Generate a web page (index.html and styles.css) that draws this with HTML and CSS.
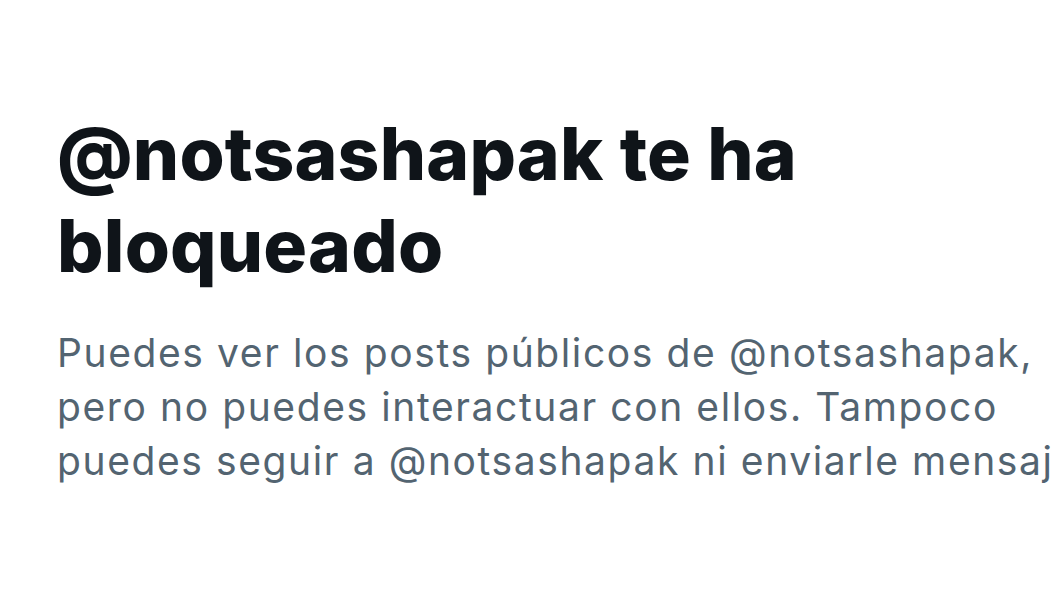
FILE: index.html
```html
<!DOCTYPE html>
<html>
<head>
  <meta charset="utf-8">
  <title>Bloqueado</title>
  <link rel="stylesheet" href="styles.css">
</head>
<body>
  <div class="blocked">
    <h1 class="blocked-title">@notsashapak te ha<br>bloqueado</h1>
    <p class="blocked-text">Puedes ver los posts públicos de @notsashapak,<br>pero no puedes interactuar con ellos. Tampoco<br>puedes seguir a @notsashapak ni enviarle mensajes.</p>
  </div>
</body>
</html>
```

FILE: styles.css
```css
:root {
  --bg-color: #FFFFFF;
  --title-color: #0F1419;
  --text-color: #536471;
}
* {
  margin: 0;
  padding: 0;
  box-sizing: border-box;
}
body {
  font-family: Inter, 'Noto Sans', sans-serif;
  background: var(--bg-color);
  width: 1054px;
  height: 593px;
  overflow: hidden;
}
.blocked {
  padding: 108px 0 0 57px;
}
.blocked-title {
  font-size: 73px;
  line-height: 92px;
  font-weight: 800;
  letter-spacing: 0.2px;
  color: var(--title-color);
  white-space: nowrap;
}
.blocked-text {
  margin-top: 34px;
  font-size: 39px;
  line-height: 54px;
  font-weight: 400;
  letter-spacing: 1.6px;
  color: var(--text-color);
  white-space: nowrap;
}
```
